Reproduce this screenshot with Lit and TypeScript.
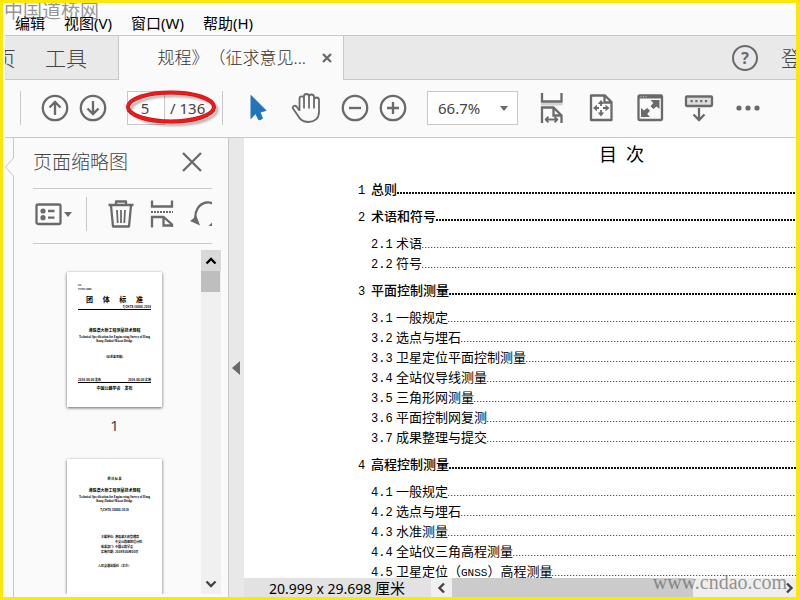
import { LitElement, html, css, svg } from "lit";
import { customElement, property } from "lit/decorators.js";
import { classMap } from "lit/directives/class-map.js";

type Entry = { no: string; title: unknown; level: 1 | 2 };

const e = (no: string, title: unknown): Entry => ({
  no,
  title,
  level: no.includes(".") ? 2 : 1,
});

const ENTRIES: Entry[] = [
  e("1", "总则"),
  e("2", "术语和符号"),
  e("2.1", "术语"),
  e("2.2", "符号"),
  e("3", "平面控制测量"),
  e("3.1", "一般规定"),
  e("3.2", "选点与埋石"),
  e("3.3", "卫星定位平面控制测量"),
  e("3.4", "全站仪导线测量"),
  e("3.5", "三角形网测量"),
  e("3.6", "平面控制网复测"),
  e("3.7", "成果整理与提交"),
  e("4", "高程控制测量"),
  e("4.1", "一般规定"),
  e("4.2", "选点与埋石"),
  e("4.3", "水准测量"),
  e("4.4", "全站仪三角高程测量"),
  e("4.5", html`卫星定位（<small class="latin">GNSS</small>）高程测量`),
];

const ICONS = {
  up: svg`<g class="s"><circle cx="15" cy="15" r="12.2"/><path d="M15 22V9.500M9.500 14.500L15 9l5.500 5.500"/></g>`,
  down: svg`<g class="s"><circle cx="15" cy="15" r="12.2"/><path d="M15 8v12.500M9.500 15.500L15 21l5.500-5.500"/></g>`,
  minus: svg`<g class="s"><circle cx="15" cy="15" r="12.2"/><path d="M9 15h12"/></g>`,
  plus: svg`<g class="s"><circle cx="15" cy="15" r="12.2"/><path d="M9 15h12M15 9v12"/></g>`,
  pointer: svg`<path fill="#2273b9" stroke="#2273b9" stroke-linejoin="round" d="M8 2.500V25.500L12.500 20.500L16 27L19.500 25.500L17 19L23 17.500z"/>`,
  hand: svg`<path class="t" d="M8.500 18V5.700a2.250 2.250 0 0 1 4.500 0V15.500M13 6V3.500a2.500 2.500 0 0 1 5 0V15.500M18 4a2.500 2.500 0 0 1 5 0V15.500M23 7a2.500 2.500 0 0 1 5 0V19C28 25.500 23.500 29 17.500 29C11 29 9 26 6.500 22L2 15.500C1 13 4 12 5.500 13.500L8.500 17.500"/>`,
  fitWidth: svg`<path fill="#d2d2d2" d="M4 10h21.500v2.500H4z"/><path class="s" d="M5 0v8.500h19.500V0M5 30V14.500H16.500L24.500 22.500V30M16.500 14.500V22.500h8"/><path class="t" d="M9 26.500h11M11.500 23.700L8.700 26.500l2.800 2.800M17.500 23.700l2.800 2.800l-2.800 2.800"/>`,
  fitPage: svg`<path class="s" stroke-linejoin="round" d="M5 2.500H19L25.500 9v18H5zM18.500 2.500V9.500h7"/><path class="t" d="M15 10v3M15 17v4M9 15h4M17 15h4"/><path class="f" d="M15 7l3.200 4h-6.400zM15 23.500l3.200-4h-6.400zM7 15l4-3.200v6.400zM23.500 15l-4-3.200v6.400z"/>`,
  full: svg`<rect class="s" x="3.500" y="2.500" width="23.500" height="24.500" rx="1"/><path class="f" d="M3 2h24v3.500H3zM15.500 7h9v9l-3-2.600l-3.200 2.600l-2.800-2.800l2.800-3.200zM15 24H6v-9l3 2.600l3.200-2.600l2.800 2.800l-2.800 3.200z"/><path stroke="#ddd" stroke-dasharray="1 1.500" d="M5.500 3.800h6"/>`,
  keyboard: svg`<rect class="s" style="fill:#ddd" x="2" y="3.500" width="26" height="9.500" rx="1"/><path stroke="#6a6a6a" stroke-width="2.2" stroke-dasharray="2.2 2.600" d="M6.500 8.200h17.500"/><path class="s" d="M15 15v11.500M9.500 21.500l5.500 5.500l5.500-5.500"/>`,
  more: svg`<g class="f"><circle cx="6" cy="15" r="2.600"/><circle cx="15" cy="15" r="2.600"/><circle cx="24" cy="15" r="2.600"/></g>`,
  options: svg`<rect class="s" x="2.500" y="5.500" width="24" height="19.500" rx="1.500"/><g class="f"><circle cx="9" cy="12" r="2.600"/><circle cx="9" cy="18.700" r="2.600"/></g><path class="s" d="M14 12h6.500M14 18.700h6.500"/>`,
  trash: svg`<path class="s" stroke-linejoin="round" d="M2.500 6h25M10 6V2.500h10V6M5 6.500l2 21h16l2-21"/><path class="t" d="M11 11l.7 13M15 11v13M19 11l-.7 13"/>`,
  split: svg`<path class="s" d="M5 1.500V7.500h20V1.500M5 28.500v-10.500h11.500l8.500 7.500v2.500M16.500 18v8.500h8.500"/><path stroke="#6a6a6a" stroke-width="2" stroke-dasharray="2 1" d="M4 13h22"/>`,
  rotate: svg`<path class="s" d="M7.500 22C6 12 11 4.500 18.500 3.500C23 3 26.500 5 29 8"/><path class="f" d="M2 22L8.500 17L12 26.500zM20.500 27l5-5v5z"/>`,
  close: svg`<path class="s" d="M6 6l18 18M24 6L6 24"/>`,
  small: svg`<path class="s" d="M11 11l8 8M19 11l-8 8"/>`,
};

@customElement("ui-icon")
export class UiIcon extends LitElement {
  @property() name: keyof typeof ICONS = "more";
  static styles = css`
    :host { display: block; width: 30px; height: 30px; flex: none; }
    svg { display: block; width: 100%; height: 100%; fill: none; }
    .s { stroke: #6a6a6a; stroke-width: 2.3; }
    .t { stroke: #6a6a6a; stroke-width: 1.8; stroke-linejoin: round; }
    .f { fill: #6a6a6a; }
  `;
  render() {
    return html`<svg viewBox="0 0 30 30" aria-hidden="true">${ICONS[this.name]}</svg>`;
  }
}

@customElement("page-thumb")
export class PageThumb extends LitElement {
  @property() kind = "cover";
  static styles = css`
    :host {
      display: block; box-sizing: border-box; width: 95px; height: 135px;
      background: #fff; box-shadow: 0 1px 3px rgba(0, 0, 0, 0.6);
      font: 700 4px/5px "Noto Sans CJK SC", sans-serif; color: #000;
      text-align: center; padding: 12px 11px 0; overflow: hidden; white-space: nowrap;
    }
    .code { text-align: left; font-size: 2px; line-height: 4px; }
    .std { display: flex; justify-content: space-between; font-size: 7px; line-height: 12px; padding: 1px 8px 0; }
    .num { text-align: right; font-size: 3px; line-height: 4px; }
    .rule { border-top: 1px solid #000; }
    .title { margin-top: 18px; }
    .en { font: 700 3px/4px "Liberation Serif", serif; margin-top: 2px; }
    .note { font-size: 3px; margin-top: 12px; }
    .dates { display: flex; justify-content: space-between; font-size: 3px; line-height: 4px; margin-top: 18px; }
    .pub { margin-top: 3px; }
    .head { margin-top: 6px; font-size: 3px; }
    .sub { margin-top: 6px; }
    .ed { font-size: 3px; margin-top: 5px; }
    .orgs { display: grid; grid-template-columns: 14px 1fr; text-align: left; font-size: 3px; line-height: 5px; margin: 22px 0 0 23px; }
    .foot { font-size: 3px; margin-top: 9px; }
  `;
  render() {
    const en = html`<div class="en">Technical Specification for Engineering Survey of Hong<br />Kong-Zhuhai-Macao Bridge</div>`;
    if (this.kind === "cover")
      return html`
        <div class="code">ICS<br />T/CHTS 10000</div>
        <div class="std"><span>团</span><span>体</span><span>标</span><span>准</span></div>
        <div class="num">T/CHTS 10000-2018</div>
        <div class="rule"></div>
        <div class="title">港珠澳大桥工程测量技术规程</div>
        ${en}
        <div class="note">（征求意见稿）</div>
        <div class="dates"><span>2018-00-00 发布</span><span>2018-00-00 实施</span></div>
        <div class="rule"></div>
        <div class="pub">中国公路学会　发布</div>`;
    return html`
      <div class="head">团 体 标 准</div>
      <div class="sub">港珠澳大桥工程测量技术规程</div>
      ${en}
      <div class="ed">T/CHTS 10000-2018</div>
      <div class="orgs">
        <span>主编单位:</span><span>港珠澳大桥管理局</span>
        <span></span><span>中交公路规划设计院</span>
        <span>批准部门:</span><span>中国公路学会</span>
        <span>实施日期:</span><span>2018年00月00日</span>
      </div>
      <div class="foot">人民交通出版社（北京）</div>`;
  }
}

@customElement("app-root")
export class AppRoot extends LitElement {
  static styles = css`
    :host {
      display: flex; flex-direction: column; box-sizing: border-box; position: relative;
      height: 100vh; min-height: 400px; overflow: hidden;
      border: 3px solid #fbe60d; border-right-width: 4px; padding: 7px 0 0 2px;
      background: #fff; color: #444;
      font: 15px/20px "Noto Sans", "Noto Sans CJK SC", sans-serif;
    }
    button { border: 0; padding: 0; margin: 0; background: none; color: inherit; font: inherit; white-space: nowrap; display: flex; align-items: center; justify-content: center; flex: none; }
    .menu { display: flex; flex: none; gap: 19px; height: 25px; padding-left: 10px; background: #fafafa; border-bottom: 1px solid #c8c8c8; color: #000; }
    .tabs { display: flex; flex: none; height: 44px; background: #e9e9e9; overflow: hidden; }
    .group { display: flex; align-items: center; box-sizing: border-box; width: 114px; border: solid #c8c8c8; border-width: 0 1px 1px 0; font-size: 21px; font-weight: 300; }
    .cut { width: 11px; justify-content: flex-end; overflow: hidden; margin-right: 29px; }
    .tab { display: flex; align-items: center; justify-content: flex-end; box-sizing: border-box; width: 224px; background: #fafafa; font-size: 17px; color: #333; font-weight: 300; gap: 6px; text-spacing-trim: space-all; padding-right: 1px; white-space: nowrap; }
    .rest { display: flex; flex: 1; min-width: 0; align-items: center; justify-content: flex-end; border: solid #c8c8c8; border-width: 0 0 1px 1px; font-size: 21px; font-weight: 300; overflow: hidden; }
    .help { box-sizing: border-box; width: 26px; height: 26px; border: 2px solid #6a6a6a; border-radius: 50%; font: 700 16px/22px "Noto Sans", sans-serif; color: #6a6a6a; margin-right: 23px; }
    .login { width: 15px; justify-content: flex-start; overflow: hidden; }
    .bar { display: flex; flex: none; align-items: center; height: 57px; padding: 0 0 1px 15px; box-sizing: border-box; background: #fafafa; }
    .edge { flex: none; border-top: 1px solid #c8c8c8; }
    .sep { width: 1px; height: 34px; background: #c8c8c8; flex: none; }
    .b38 { width: 38px; } .b48 { width: 48px; }
    .b49 { width: 49px; justify-content: flex-start; padding-left: 10px; }
    .gap { margin-left: 15px; }
    .pager { display: flex; align-items: center; position: relative; width: 95px; margin-left: 15px; gap: 5px; color: #444; }
    .field { box-sizing: border-box; width: 38px; height: 34px; border: 1px solid #c8c8c8; background: #fff; color: #444; font: 15px/20px "Noto Sans", sans-serif; text-align: center; padding: 0 2px 0 0; margin: 0; }
    .mark { position: absolute; left: -4px; top: -6px; width: 100px; height: 44px; pointer-events: none; }
    .soft { filter: blur(1px); }
    .tools { display: flex; margin: 0 6px 0 11px; }
    .zoom { position: relative; margin-left: 15px; margin-right: 9px; }
    .zoom select { display: block; box-sizing: border-box; appearance: none; width: 91px; height: 34px; border: 1px solid #c8c8c8; border-radius: 0; background: #fff; color: #444; font: 15px/20px "Noto Sans", sans-serif; padding: 0 0 0 10px; }
    .caret { width: 0; height: 0; border: solid transparent; border-width: 5px 4px 0; border-top-color: #6a6a6a; flex: none; }
    .zoom .caret { position: absolute; right: 10px; top: 15px; pointer-events: none; }
    .main { display: flex; flex: 1; min-height: 0; background: #fafafa; }
    .rail { width: 9px; flex: none; overflow: hidden; }
    .rail svg { display: block; fill: none; stroke: #c8c8c8; }
    .side { display: flex; flex-direction: column; box-sizing: border-box; width: 215px; flex: none; border-right: 1px solid #c8c8c8; padding-bottom: 3px; }
    .head, .actions { display: flex; align-items: center; box-sizing: border-box; flex: none; margin: 0 16px 0 19px; border-bottom: 1px solid #c8c8c8; }
    .head { height: 51px; justify-content: space-between; padding: 0 5px 2px 0; }
    .head h2 { margin: 0; font-size: 19px; line-height: 24px; font-weight: 300; }
    .actions { height: 55px; padding-bottom: 4px; overflow: hidden; }
    .actions .sep { margin: 0 19px 0 14px; }
    .actions button { margin-right: 11px; }
    .actions .opt { margin: 0; padding-left: 1px; }
    .list { display: flex; flex: 1; min-height: 0; margin-top: 6px; }
    .pages { flex: 1; overflow: hidden; padding: 22px 0 0 14px; display: flex; flex-direction: column; align-items: center; color: #444; }
    .pages page-thumb { flex: none; }
    .pages span { flex: none; line-height: 20px; margin: 8px 0 24px; }
    .vscroll { display: flex; flex-direction: column; justify-content: space-between; width: 20px; margin-right: 7px; background: #f0f0f0; }
    .vscroll button { width: 100%; height: 21px; }
    .vscroll .up { background: #d9d9d9; color: #000; }
    .thumb { height: 21px; margin-right: 1px; background: #bebebe; }
    .chev { width: 12px; height: 12px; fill: none; stroke: currentColor; stroke-width: 2.4; }
    .gutter { display: flex; align-items: center; box-sizing: border-box; width: 15px; padding-left: 3px; flex: none; background: #e8e8e8; }
    .tri { width: 0; height: 0; border: solid transparent; border-width: 7px 8px 7px 0; border-right-color: #6a6a6a; }
    .doc { display: flex; flex-direction: column; flex: 1; min-width: 0; }
    .sheet { flex: 1; min-height: 0; overflow: hidden; background: #fff; color: #000; padding-left: 114px; font: 400 13px/20px "Noto Sans CJK SC", sans-serif; }
    .sheet h1 { margin: 4px 0 15px; padding-left: 241px; font-size: 18px; line-height: 22px; font-weight: 400; white-space: nowrap; }
    .row { display: flex; align-items: baseline; height: 20px; }
    .row.sub { padding-left: 13px; }
    .row.top { margin: 7px 0; font-weight: 500; }
    .no { width: 13px; flex: none; font-family: "Liberation Mono", monospace; font-size: 12px; line-height: 14px; }
    .sub .no { width: 25px; }
    .name { flex: none; white-space: nowrap; }
    .latin { font: 11px/12px "Liberation Mono", monospace; }
    .dots { flex: 1; height: 2px; background: repeating-linear-gradient(90deg, #111 0 2px, transparent 2px 3px); }
    .sub .dots { height: 1px; background: repeating-linear-gradient(90deg, #555 0 1px, #ccc 1px 2px, transparent 2px 3px); }
    .status { display: flex; flex: none; height: 19px; background: #eee; color: #000; }
    .size { box-sizing: border-box; width: 187px; padding-left: 25px; background: #e2e2e2; white-space: nowrap; font-size: 14px; }
    .unit { font-size: 15px; }
    .status button { width: 21px; color: #444; background: #f0f0f0; }
    .htrack { flex: 1; display: flex; }
    .hthumb { width: 73%; background: #cbcbcb; }
    .status .last { width: 14px; background: none; }
    .brand, .site { position: absolute; color: rgba(90, 90, 90, 0.65); white-space: nowrap; pointer-events: none; }
    .brand { left: 1px; top: -3px; font: 19px/24px "Liberation Serif", "Noto Sans CJK SC", serif; }
    .site { right: 9px; bottom: 3px; font: 20px/24px "Liberation Serif", serif; }
  `;

  private btn(name: string, label: string, cls: string) {
    return html`<button class=${cls} aria-label=${label}><ui-icon name=${name}></ui-icon></button>`;
  }

  private chevron(d: string) {
    return html`<svg class="chev" viewBox="0 0 12 12" aria-hidden="true"><path d=${d} /></svg>`;
  }

  render() {
    return html`
      <nav class="menu">
        <button>编辑</button><button>视图(V)</button><button>窗口(W)</button><button>帮助(H)</button>
      </nav>
      <div class="tabs">
        <div class="group"><button class="cut">主页</button><button>工具</button></div>
        <div class="tab"><span>规程》（征求意见...</span>${this.btn("small", "关闭标签", "")}</div>
        <div class="rest">
          <button class="help" aria-label="帮助">?</button>
          <button class="login">登录</button>
        </div>
      </div>
      <div class="bar">
        <span class="sep"></span>
        ${this.btn("up", "上一页", "b38 gap")}${this.btn("down", "下一页", "b38")}
        <div class="pager">
          <input class="field" aria-label="页码" .value=${"5"} /><span>/ 136</span>
          <svg class="mark" viewBox="0 0 100 44" fill="none" aria-hidden="true">
            <ellipse class="soft" cx="51" cy="25" rx="43" ry="14.500" stroke="rgba(0,0,0,.3)" stroke-width="3" />
            <ellipse cx="48" cy="22" rx="43" ry="14.500" stroke="#b51515" stroke-width="4" />
            <ellipse cx="48" cy="22" rx="43" ry="14.500" stroke="#f01818" stroke-width="3" />
          </svg>
        </div>
        <span class="sep"></span>
        <div class="tools">${this.btn("pointer", "选择", "b48")}${this.btn("hand", "平移", "b48")}</div>
        ${this.btn("minus", "缩小", "b38")}${this.btn("plus", "放大", "b38")}
        <div class="zoom">
          <select aria-label="缩放比例"><option>66.7%</option></select><span class="caret"></span>
        </div>
        ${this.btn("fitWidth", "适合宽度", "b49")}${this.btn("fitPage", "适合页面", "b49")}
        ${this.btn("full", "全屏", "b49")}${this.btn("keyboard", "工具栏", "b49")}${this.btn("more", "更多", "b49")}
      </div>
      <div class="edge"></div>
      <div class="main">
        <div class="rail">
          <svg width="9" height="460" viewBox="0 0 9 460"><path d="M8.500 0V20L.5 29l8 9V460" /></svg>
        </div>
        <aside class="side">
          <header class="head"><h2>页面缩略图</h2>${this.btn("close", "关闭", "")}</header>
          <div class="actions">
            <button class="opt" aria-label="选项"><ui-icon name="options"></ui-icon><span class="caret"></span></button>
            <span class="sep"></span>
            ${this.btn("trash", "删除", "")}${this.btn("split", "拆分", "")}${this.btn("rotate", "旋转", "")}
          </div>
          <div class="list">
            <div class="pages">
              <page-thumb kind="cover"></page-thumb><span>1</span>
              <page-thumb kind="title"></page-thumb>
            </div>
            <div class="vscroll">
              <div>
                <button class="up" aria-label="向上">${this.chevron("M1.500 8.500L6 4l4.500 4.500")}</button>
                <div class="thumb"></div>
              </div>
              <button aria-label="向下">${this.chevron("M1.500 3.500L6 8l4.500-4.500")}</button>
            </div>
          </div>
        </aside>
        <div class="gutter"><button aria-label="折叠"><span class="tri"></span></button></div>
        <section class="doc">
          <div class="sheet">
            <h1>目&ensp;次</h1>
            ${ENTRIES.map(
              (r) => html`<div class=${classMap({ row: true, top: r.level === 1, sub: r.level === 2 })}>
                <span class="no">${r.no}</span><span class="name">${r.title}</span><span class="dots"></span>
              </div>`,
            )}
          </div>
          <div class="status">
            <span class="size">20.999 x 29.698 <span class="unit">厘米</span></span>
            <button aria-label="向左">${this.chevron("M8 1.500L3.500 6L8 10.500")}</button>
            <div class="htrack"><div class="hthumb"></div></div>
            <button class="last" aria-label="向右">${this.chevron("M4 1.500L8.500 6L4 10.500")}</button>
          </div>
        </section>
      </div>
      <span class="brand">中国道桥网</span>
      <span class="site">www.cndao.com</span>
    `;
  }
}
